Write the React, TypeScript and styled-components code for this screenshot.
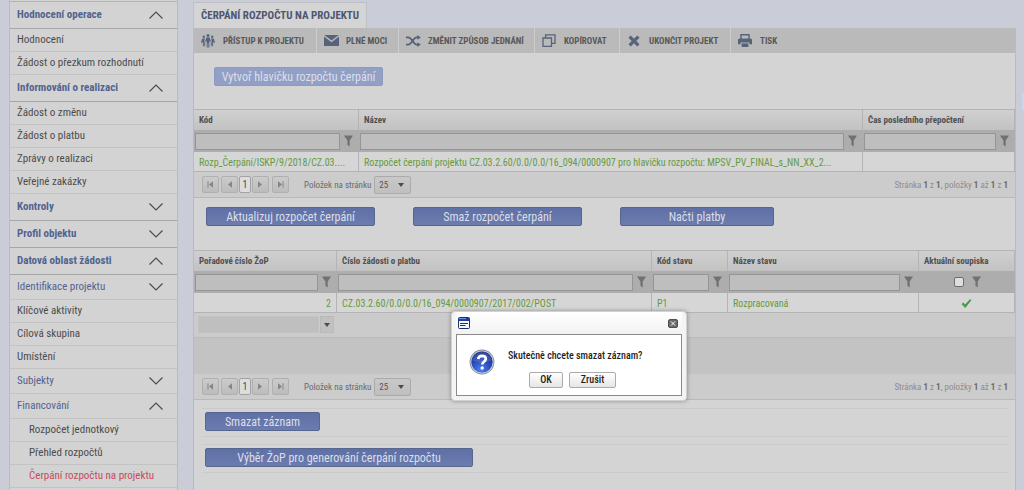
import React from "react";
import styled, { createGlobalStyle, css } from "styled-components";

const Global = createGlobalStyle`
  *, *::before, *::after { box-sizing: border-box; }
  html, body { margin: 0; padding: 0; }
  body, button, input, select {
    font-family: "Roboto Condensed", "Liberation Sans Narrow", Roboto, "Liberation Sans", sans-serif;
  }
  body { background: #cacdd8; color: #505050; font-size: 11px; }
`;

const Page = styled.div`
  display: grid;
  grid-template-columns: 169px minmax(0, 1fr);
  column-gap: 15px;
  min-height: 100vh;
  padding: 0 8px 0 9px;
`;

/* edge of the help drawer that is pulled in from the right */
const DrawerEdge = styled.div`
  position: absolute;
  top: 93px;
  right: 0;
  width: 2px;
  height: 17px;
  background: #c3dcec;
`;

/* ---------- side menu ---------- */
const Sidebar = styled.nav`
  background: #d3d3d3;
  border: solid #b9bbbf;
  border-width: 0 1px;
  &::before {
    content: "";
    display: block;
    height: 2px;
    border-bottom: 1px solid #b4b4b4;
  }
`;

const rowBase = css`
  display: flex;
  align-items: center;
  width: 100%;
  font-size: 11px;
  line-height: 16px;
  text-decoration: none;
  white-space: nowrap;
`;

const MenuItem = styled.a<{ $nested?: boolean; $active?: boolean }>`
  ${rowBase}
  height: 23px;
  border-bottom: 1px solid #c3c3c3;
  color: ${(p) => (p.$active ? "#c74b5c" : "#4c4c4c")};
  padding: 0 13px 0 ${(p) => (p.$nested ? 19 : 7)}px;
`;

const MenuGroup = styled.button<{ $minor?: boolean }>`
  ${rowBase}
  justify-content: space-between;
  height: ${(p) => (p.$minor ? 25 : 27)}px;
  padding: 0 14px 0 7px;
  background: none;
  border: 0;
  border-bottom: 1px solid ${(p) => (p.$minor ? "#c3c3c3" : "#a6a6a6")};
  color: #52638f;
  font-weight: ${(p) => (p.$minor ? 400 : 700)};
`;

const Chevron = ({ up }: { up?: boolean }) => (
  <svg width="14" height="8" viewBox="0 0 14 8" fill="none" stroke="#4a4a4a" strokeWidth="1.1" aria-hidden>
    <path d={up ? "M0.5 7.5 L7 1 L13.5 7.5" : "M0.5 0.5 L7 7 L13.5 0.5"} />
  </svg>
);

type Entry = { label: string; kind: "group" | "minor" | "item" | "nested"; open?: boolean; active?: boolean };

const menu: Entry[] = [
  { label: "Hodnocení operace", kind: "group", open: true },
  { label: "Hodnocení", kind: "item" },
  { label: "Žádost o přezkum rozhodnutí", kind: "item" },
  { label: "Informování o realizaci", kind: "group", open: true },
  { label: "Žádost o změnu", kind: "item" },
  { label: "Žádost o platbu", kind: "item" },
  { label: "Zprávy o realizaci", kind: "item" },
  { label: "Veřejné zakázky", kind: "item" },
  { label: "Kontroly", kind: "group" },
  { label: "Profil objektu", kind: "group" },
  { label: "Datová oblast žádosti", kind: "group", open: true },
  { label: "Identifikace projektu", kind: "minor" },
  { label: "Klíčové aktivity", kind: "item" },
  { label: "Cílová skupina", kind: "item" },
  { label: "Umístění", kind: "item" },
  { label: "Subjekty", kind: "minor" },
  { label: "Financování", kind: "minor", open: true },
  { label: "Rozpočet jednotkový", kind: "nested" },
  { label: "Přehled rozpočtů", kind: "nested" },
  { label: "Čerpání rozpočtu na projektu", kind: "nested", active: true },
];

/* ---------- main column ---------- */
const Main = styled.main`
  display: flex;
  flex-direction: column;
  min-width: 0;
  padding-top: 2px;
`;

const Tab = styled.h1`
  align-self: flex-start;
  height: 26px;
  margin: 0;
  padding: 0 7px;
  background: #d4d4d4;
  border: 1px solid #bfc0c5;
  border-bottom: 0;
  color: #4c5672;
  font-size: 11px;
  font-weight: 700;
  line-height: 25px;
  white-space: nowrap;
`;

const Panel = styled.section`
  flex: 1;
  background: #d4d4d4;
  border: solid #b9bbbf;
  border-width: 0 1px;
`;

const Toolbar = styled.div`
  display: flex;
  height: 25px;
  background: #bababa;
`;

const Tool = styled.button<{ $w: number }>`
  display: flex;
  align-items: center;
  gap: 7px;
  width: ${(p) => p.$w}px;
  padding: 0 0 0 6px;
  background: none;
  border: 0;
  border-right: 1px solid #cdcdcd;
  color: #585858;
  font-size: 9px;
  font-weight: 700;
  white-space: nowrap;
  &:last-child { border-right: 0; }
`;

const ToolIcon = styled.span`
  display: flex;
  justify-content: center;
  width: 16px;
`;

const Actions = styled.div<{ $pad: string }>`
  display: flex;
  padding: ${(p) => p.$pad};
`;

const Action = styled.button<{ $w: number; $gap?: number; $off?: boolean }>`
  width: ${(p) => p.$w}px;
  height: 19px;
  margin: 0 ${(p) => p.$gap ?? 0}px 0 0;
  padding: 1px 0 0;
  border: 1px solid ${(p) => (p.$off ? "#8d9bc0" : "#56668f")};
  border-radius: 2px;
  background: ${(p) => (p.$off ? "#93a0c6" : "linear-gradient(#5f70a6, #6c7caf)")};
  color: #dcdfe8;
  font-size: 12px;
  line-height: 16px;
  white-space: nowrap;
`;

/* ---------- data grid ---------- */
const Table = styled.table`
  width: 100%;
  table-layout: fixed;
  border-collapse: separate;
  border-spacing: 0;
`;

const Head = styled.th`
  height: 21px;
  padding: 0 0 0 5px;
  background: linear-gradient(#d0d0d0, #c2c2c2);
  border: solid #b4b4b4;
  border-width: 1px 1px 0 0;
  color: #505050;
  font-size: 9px;
  font-weight: 700;
  line-height: 16px;
  text-align: left;
  white-space: nowrap;
`;

const FilterCell = styled.td<{ $center?: boolean }>`
  height: 22px;
  padding: ${(p) => (p.$center ? "0" : "0 6px 0 1px")};
  background: #adadad;
  > div {
    display: flex;
    align-items: center;
    justify-content: ${(p) => (p.$center ? "center" : "flex-start")};
    gap: ${(p) => (p.$center ? 8 : 4)}px;
  }
`;

const FilterInput = styled.input`
  flex: 1;
  min-width: 0;
  height: 17px;
  background: #bebebe;
  border: 1px solid #959595;
  font-size: 9px;
`;

const FilterTick = styled.input`
  appearance: none;
  width: 10px;
  height: 10px;
  margin: 0;
  background: #dedede;
  border: 1px solid #6e6e6e;
  border-radius: 2px;
`;

const Cell = styled.td<{ $align?: string }>`
  height: 20px;
  padding: 2px 5px 0;
  background: #d6d6d6;
  border: solid #b4b4b4;
  border-width: 0 1px 1px 0;
  color: #649a40;
  font-size: 10px;
  line-height: 16px;
  text-align: ${(p) => p.$align ?? "left"};
  white-space: nowrap;
  svg { display: block; margin: 0 auto; }
`;

const Pager = styled.div`
  display: flex;
  align-items: center;
  height: 26px;
  padding: 0 7px 0 8px;
  background: #cccccc;
  border-bottom: 1px solid #b9b9b9;
  color: #6a6a6a;
  font-size: 9px;
`;

const PageButton = styled.button<{ $on?: boolean; $gap?: number }>`
  display: flex;
  align-items: center;
  justify-content: center;
  width: ${(p) => (p.$on ? 12 : 17)}px;
  height: 17px;
  margin: 0 ${(p) => p.$gap ?? 0}px 0 0;
  padding: 0;
  background: ${(p) => (p.$on ? "#dddddd" : "linear-gradient(#cbcbcb, #bcbcbc)")};
  border: 1px solid ${(p) => (p.$on ? "#a2a2a2" : "#b0b0b0")};
  border-radius: 2px;
  color: #4a4a4a;
  font-size: 10px;
`;

const SizeLabel = styled.label`
  display: flex;
  align-items: center;
  gap: 3px;
  margin-left: 15px;
  white-space: nowrap;
`;

const SelectBox = styled.span`
  position: relative;
  display: inline-flex;
  svg {
    position: absolute;
    right: 7px;
    top: 7px;
    pointer-events: none;
  }
`;

const SizeSelect = styled.select`
  appearance: none;
  width: 37px;
  height: 18px;
  padding: 0 0 0 4px;
  background: linear-gradient(#c8c8c8, #bfbfbf);
  border: 1px solid #ababab;
  border-radius: 2px;
  color: #555555;
  font-size: 9px;
`;

const Summary = styled.span`
  margin-left: auto;
  color: #8d8d8d;
  white-space: nowrap;
  b { color: #6c6c6c; }
`;

const EntryRow = styled.div`
  display: flex;
  gap: 1px;
  height: 25px;
  padding: 3px 4px;
  background: #cbcbcb;
  border-bottom: 1px solid #bcbcbc;
`;

const EntryInput = styled.input`
  width: 121px;
  height: 17px;
  background: #bfbfbf;
  border: 1px solid #c3c3c3;
`;

const EntryDrop = styled.button`
  display: flex;
  align-items: center;
  justify-content: center;
  width: 14px;
  height: 17px;
  padding: 0;
  background: #c1c1c1;
  border: 1px solid #bababa;
`;

const Blank = styled.div`
  height: 36px;
  background: #c3c3c3;
`;

const CommandList = styled.div`
  display: flex;
  flex-direction: column;
  gap: 7px;
  padding: 8px 7px 8px 8px;
`;

const Command = styled.div`
  height: 29px;
  padding: 3px;
  border: 1px solid #cacaca;
  border-width: 1px 0;
`;

/* ---------- dialog ---------- */
const Dialog = styled.div`
  position: absolute;
  left: 451px;
  top: 311px;
  width: 236px;
  padding: 0 4px 4px;
  background: #f4f4f4;
  border: 1px solid #d2d2d2;
  border-radius: 4px;
  box-shadow: 0 0 4px rgba(0, 0, 0, 0.35);
`;

const DialogTitle = styled.div`
  display: flex;
  align-items: center;
  justify-content: space-between;
  height: 22px;
  padding: 0 4px 0 2px;
  background: linear-gradient(#ffffff, #f2f2f2);
`;

const CloseButton = styled.button`
  display: flex;
  align-items: center;
  justify-content: center;
  width: 10px;
  height: 9px;
  padding: 0;
  background: #6c6c6c;
  border: 1px solid #4f4f4f;
  border-radius: 2px;
`;

const DialogBody = styled.div`
  display: flex;
  gap: 13px;
  height: 62px;
  padding: 14px 12px 0;
  background: #ffffff;
  border: 1px solid #8a8a8a;
`;

const DialogContent = styled.div`
  display: flex;
  flex-direction: column;
`;

const Message = styled.p`
  margin: 0 0 9px;
  color: #1e1e1e;
  font-size: 10px;
  font-weight: 500;
  line-height: 14px;
  white-space: nowrap;
`;

const Choices = styled.div`
  display: flex;
  gap: 6px;
  padding-left: 21px;
`;

const Choice = styled.button<{ $w: number }>`
  width: ${(p) => p.$w}px;
  height: 16px;
  padding: 0;
  background: linear-gradient(#ffffff, #e6e6e6);
  border: 1px solid #ababab;
  border-radius: 2px;
  color: #1e1e1e;
  font-size: 10px;
  font-weight: 500;
  line-height: 14px;
`;

/* ---------- icons ---------- */
const ink = "#56637a";

const PeopleIcon = () => (
  <svg width="14" height="14" viewBox="0 0 14 14" fill={ink} aria-hidden>
    <circle cx="7" cy="1.6" r="1.5" />
    <circle cx="2.8" cy="2.8" r="1.2" />
    <circle cx="11.2" cy="2.8" r="1.2" />
    <path d="M5.2 3.6h3.6l1 4-.9.5-.6-1.900v7.300H7.300V9.200h-.6v4.300H5.700V6.200l-.6 1.900-.9-.5z" />
    <path d="M1.300 4.500h2.500L3.300 8l.9.9v3.400h-.9V9.300h-.5v3h-.9V7.200L.9 9 0 8.500z" />
    <path d="M12.700 4.500h-2.500l.5 3.500-.9.9v3.400h.9V9.300h.5v3h.9V7.200l1 1.800.9-.5z" />
  </svg>
);
const MailIcon = () => (
  <svg width="15" height="11" viewBox="0 0 15 11" fill={ink} aria-hidden>
    <path d="M0.3 0h14.4L7.5 5.6z" />
    <path d="M0 1.4l7.5 5.8L15 1.4V11H0z" />
  </svg>
);
const ShuffleIcon = () => (
  <svg width="15" height="12" viewBox="0 0 15 12" aria-hidden>
    <path d="M0 2.3h2.2C6 2.3 7.2 9.6 10.6 9.6H12M0 9.6h2.2C6 9.6 7.2 2.3 10.6 2.3H12" fill="none" stroke={ink} strokeWidth="1.8" />
    <path d="M11.3 0l3.5 2.4-3.5 2.3zM11.3 7.2l3.5 2.4-3.5 2.4z" fill={ink} />
  </svg>
);
const CopyIcon = () => (
  <svg width="14" height="13" viewBox="0 0 14 13" fill="none" stroke={ink} strokeWidth="1.3" aria-hidden>
    <path d="M1 4h8.5v8.3H1zM3.6 3.8V.8H13v8.6H9.8" />
  </svg>
);
const CrossIcon = () => (
  <svg width="12" height="12" viewBox="0 0 12 12" aria-hidden>
    <path d="M1.6 1.6l8.8 8.8M10.4 1.6l-8.8 8.8" stroke={ink} strokeWidth="3.2" />
  </svg>
);
const PrintIcon = () => (
  <svg width="14" height="13" viewBox="0 0 14 13" aria-hidden>
    <path d="M3 5V.8h8V5" fill="none" stroke={ink} strokeWidth="1.4" />
    <path d="M1.2 4.4h11.6l1.2 1v4.8h-2.6V8.4H2.6v1.8H0V5.4z" fill={ink} />
    <path d="M3.6 9.4h6.8V13H3.6z" fill={ink} />
  </svg>
);
const Funnel = () => (
  <svg width="9" height="12" viewBox="0 0 9 12" fill="#717171" aria-hidden>
    <path d="M0 0.5h9L5.7 5.4V11.6L3.4 9.8V5.4z" />
  </svg>
);
const Caret = () => (
  <svg width="6" height="4" viewBox="0 0 6 4" fill="#4b4b4b" aria-hidden>
    <path d="M0 0h6L3 4z" />
  </svg>
);
const Tick = () => (
  <svg width="11" height="9" viewBox="0 0 11 9" aria-hidden>
    <path d="M0.5 5l2-1.6L4 5.4 9 0.3l1.5.8L4.3 8.9z" fill="#459a4d" />
  </svg>
);
const Arrow = ({ back, edge }: { back?: boolean; edge?: boolean }) => (
  <svg width="7" height="7" viewBox="0 0 7 7" aria-hidden>
    <g transform={back ? undefined : "rotate(180 3.5 3.5)"}>
      <path d="M6 0.3v6.4L2 3.5z" fill="#858585" />
      {edge && <path d="M1 0.3v6.4" stroke="#858585" strokeWidth="1" />}
    </g>
  </svg>
);
const WindowIcon = () => (
  <svg width="12" height="12" viewBox="0 0 12 12" aria-hidden>
    <rect x="0.5" y="0.5" width="11" height="11" rx="1" fill="#f4f7ff" stroke="#1c2f6b" />
    <path d="M0.5 1h11v3h-11z" fill="#1d3f9a" />
    <path d="M1 1.6h7" stroke="#6fa0e8" />
    <path d="M2 6.5h8M2 8.5h5.5" stroke="#28345e" />
  </svg>
);
const QuestionIcon = () => (
  <svg width="26" height="26" viewBox="0 0 26 26" role="img" aria-label="Dotaz">
    <defs>
      <radialGradient id="ball" cx="0.45" cy="0.85" r="0.85">
        <stop offset="0" stopColor="#4f7df0" />
        <stop offset="0.6" stopColor="#2444b4" />
        <stop offset="1" stopColor="#1a2c86" />
      </radialGradient>
    </defs>
    <circle cx="13" cy="13" r="12.4" fill="#7f889c" />
    <circle cx="13" cy="13" r="11.6" fill="#c3cad8" />
    <circle cx="13" cy="13" r="10.6" fill="url(#ball)" />
    <path d="M3.2 11.5a9.9 9.9 0 0 1 19.6 0Q13 15.5 3.2 11.5z" fill="#ffffff" opacity="0.12" />
    <path d="M9.2 10.2Q9.4 6.8 13.1 6.8Q16.9 6.9 16.8 9.9Q16.7 11.6 14.8 12.8Q13.3 13.8 13.3 15.6" fill="none" stroke="#ffffff" strokeWidth="2.7" />
    <circle cx="13.2" cy="19" r="1.7" fill="#ffffff" />
  </svg>
);

const tools = [
  { label: "PŘÍSTUP K PROJEKTU", w: 123, Icon: PeopleIcon },
  { label: "PLNÉ MOCI", w: 82, Icon: MailIcon },
  { label: "ZMĚNIT ZPŮSOB JEDNÁNÍ", w: 136, Icon: ShuffleIcon },
  { label: "KOPÍROVAT", w: 85, Icon: CopyIcon },
  { label: "UKONČIT PROJEKT", w: 111, Icon: CrossIcon },
  { label: "TISK", w: 60, Icon: PrintIcon },
];

const GridPager = () => (
  <Pager>
    <PageButton aria-label="První stránka" $gap={2}><Arrow back edge /></PageButton>
    <PageButton aria-label="Předchozí stránka" $gap={1}><Arrow back /></PageButton>
    <PageButton $on $gap={1}>1</PageButton>
    <PageButton aria-label="Další stránka" $gap={3}><Arrow /></PageButton>
    <PageButton aria-label="Poslední stránka"><Arrow edge /></PageButton>
    <SizeLabel>
      Položek na stránku
      <SelectBox>
        <SizeSelect defaultValue="25"><option>25</option></SizeSelect>
        <Caret />
      </SelectBox>
    </SizeLabel>
    <Summary>Stránka <b>1</b> z <b>1</b>, položky <b>1</b> až <b>1</b> z <b>1</b></Summary>
  </Pager>
);

type Column = { title: string; w?: number; value: React.ReactNode; align?: string; tick?: boolean };

const DataGrid = ({ columns }: { columns: Column[] }) => (
  <Table>
    <colgroup>
      {columns.map((c) => <col key={c.title} style={{ width: c.w }} />)}
    </colgroup>
    <thead>
      <tr>{columns.map((c) => <Head key={c.title} scope="col">{c.title}</Head>)}</tr>
    </thead>
    <tbody>
      <tr>
        {columns.map((c) => (
          <FilterCell key={c.title} $center={c.tick}>
            <div>
              {c.tick ? <FilterTick type="checkbox" aria-label={c.title} /> : <FilterInput aria-label={c.title} />}
              <Funnel />
            </div>
          </FilterCell>
        ))}
      </tr>
      <tr>{columns.map((c) => <Cell key={c.title} $align={c.align}>{c.value}</Cell>)}</tr>
    </tbody>
  </Table>
);

const budgetColumns: Column[] = [
  { title: "Kód", w: 165, value: "Rozp_Čerpání/ISKP/9/2018/CZ.03...." },
  { title: "Název", value: "Rozpočet čerpání projektu CZ.03.2.60/0.0/0.0/16_094/0000907 pro hlavičku rozpočtu: MPSV_PV_FINAL_s_NN_XX_2..." },
  { title: "Čas posledního přepočtení", w: 152, value: "" },
];

const paymentColumns: Column[] = [
  { title: "Pořadové číslo ŽoP", w: 143, value: "2", align: "right" },
  { title: "Číslo žádosti o platbu", value: "CZ.03.2.60/0.0/0.0/16_094/0000907/2017/002/POST" },
  { title: "Kód stavu", w: 76, value: "P1" },
  { title: "Název stavu", w: 191, value: "Rozpracovaná" },
  { title: "Aktuální soupiska", w: 96, value: <Tick />, align: "center", tick: true },
];

export default function App() {
  return (
    <>
      <Global />
      <Page>
        <Sidebar>
          {menu.map((m) =>
            m.kind === "group" || m.kind === "minor" ? (
              <MenuGroup key={m.label} $minor={m.kind === "minor"} aria-expanded={!!m.open}>
                {m.label}
                <Chevron up={m.open} />
              </MenuGroup>
            ) : (
              <MenuItem key={m.label} href="#" $nested={m.kind === "nested"} $active={m.active}>
                {m.label}
              </MenuItem>
            )
          )}
        </Sidebar>
        <Main>
          <Tab>ČERPÁNÍ ROZPOČTU NA PROJEKTU</Tab>
          <Panel>
            <Toolbar>
              {tools.map(({ label, w, Icon }) => (
                <Tool key={label} $w={w}><ToolIcon><Icon /></ToolIcon>{label}</Tool>
              ))}
            </Toolbar>
            <Actions $pad="14px 20px 23px">
              <Action $w={169} $off>Vytvoř hlavičku rozpočtu čerpání</Action>
            </Actions>
            <DataGrid columns={budgetColumns} />
            <GridPager />
            <Actions $pad="9px 12px 24px">
              <Action $w={169} $gap={38}>Aktualizuj rozpočet čerpání</Action>
              <Action $w={169} $gap={38}>Smaž rozpočet čerpání</Action>
              <Action $w={154}>Načti platby</Action>
            </Actions>
            <DataGrid columns={paymentColumns} />
            <EntryRow>
              <EntryInput aria-label="Pořadové číslo" />
              <EntryDrop aria-label="Rozbalit"><Caret /></EntryDrop>
            </EntryRow>
            <Blank />
            <GridPager />
            <CommandList>
              <Command><Action $w={115}>Smazat záznam</Action></Command>
              <Command><Action $w={268}>Výběr ŽoP pro generování čerpání rozpočtu</Action></Command>
            </CommandList>
          </Panel>
        </Main>
      </Page>
      <DrawerEdge />
      <Dialog role="dialog" aria-labelledby="question">
        <DialogTitle>
          <WindowIcon />
          <CloseButton aria-label="Zavřít">
            <svg width="6" height="5" viewBox="0 0 6 5" stroke="#fff" aria-hidden><path d="M1 0.5l4 4M5 0.5l-4 4" /></svg>
          </CloseButton>
        </DialogTitle>
        <DialogBody>
          <QuestionIcon />
          <DialogContent>
            <Message id="question">Skutečně chcete smazat záznam?</Message>
            <Choices>
              <Choice $w={34}>OK</Choice>
              <Choice $w={47}>Zrušit</Choice>
            </Choices>
          </DialogContent>
        </DialogBody>
      </Dialog>
    </>
  );
}
